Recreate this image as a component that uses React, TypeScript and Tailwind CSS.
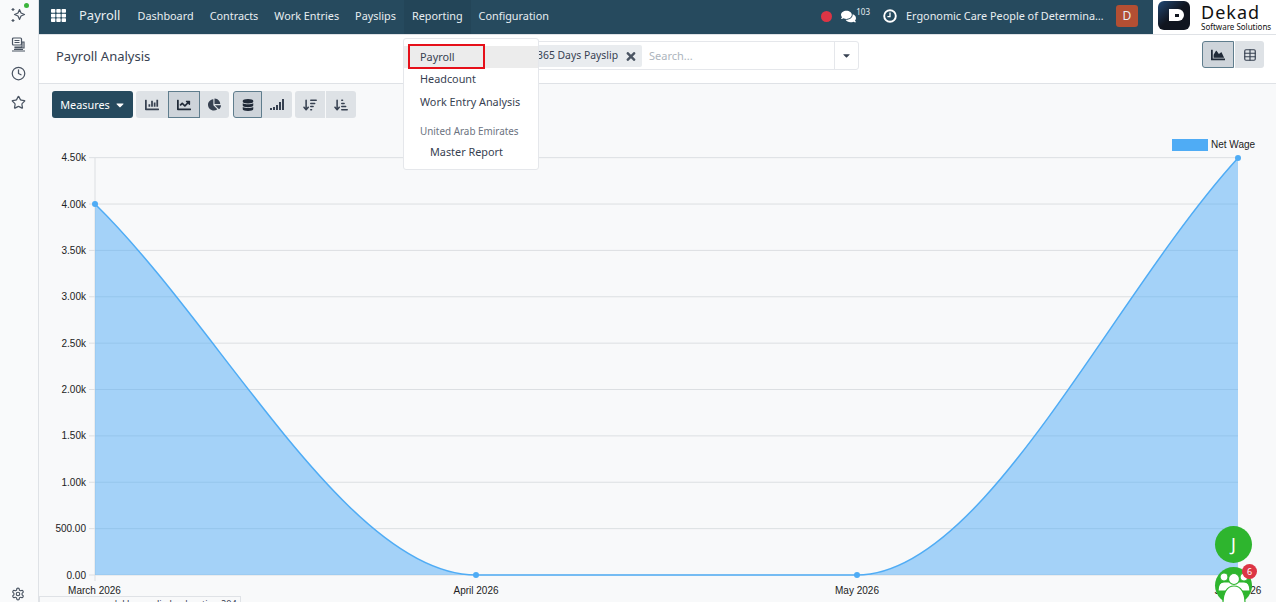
import { FaCaretDown, FaChartBar, FaChartLine, FaChartPie, FaChartArea, FaDatabase, FaTimes, FaTh, FaComments } from "react-icons/fa";
import { FaArrowDownWideShort, FaArrowDownShortWide } from "react-icons/fa6";
import { LuClock, LuStar, LuSettings, LuTable } from "react-icons/lu";

const menu = ["Dashboard", "Contracts", "Work Entries", "Payslips"];

function Sidebar() {
  return (
    <aside className="relative z-10 flex w-[39px] shrink-0 flex-col items-center border-r border-[#dfe2e6] bg-[#f9fafb] pr-[2px] text-[#4b5563]">
      <span className="absolute left-[24px] top-[3px] h-[5px] w-[5px] rounded-full bg-[#3cb53c]" />
      <svg className="mt-[7px]" width="16" height="16" viewBox="0 0 16 16" fill="none" stroke="currentColor" strokeWidth="1.2" strokeLinejoin="round">
        <path d="M9.5 2.5 11 6l3.5 1.5L11 9l-1.5 3.5L8 9 4.5 7.5 8 6z" />
        <path d="M3 1v3M1.5 2.5h3M3 12v3M1.5 13.5h3" />
      </svg>
      <svg className="mt-[14px]" width="15" height="15" viewBox="0 0 15 15" fill="none" stroke="currentColor" strokeWidth="1.2">
        <rect x="1.5" y="1" width="9" height="7" rx="1" />
        <path d="M3.5 3.5h5M3.5 5.5h5M4 10h7V5h2v6H4zM1 14h13M3 12.5h9" />
      </svg>
      <LuClock className="mt-[14px] text-[15px]" />
      <LuStar className="mt-[14px] text-[15px]" />
      <LuSettings className="mt-auto mb-[1px] text-[14px]" />
    </aside>
  );
}

function Navbar() {
  return (
    <header className="flex h-[35px] items-stretch border-b border-[#dfe2e6] bg-[#264a5e] text-[10.85px] text-[#e8eef1]">
      <div className="flex w-[27px] items-center justify-end pb-[3px]">
        <FaTh className="text-[15px] text-white" />
      </div>
      <span className="ml-[13px] flex items-center pb-[2px] text-[13px]">Payroll</span>
      <nav className="ml-[9px] flex">
        {menu.map((m) => (
          <span key={m} className="flex items-center px-[8px] pb-[2px]">{m}</span>
        ))}
        <span className="flex items-center bg-[#234558] px-[8px] pb-[2px]">Reporting</span>
        <span className="flex items-center px-[8px] pb-[2px]">Configuration</span>
      </nav>
      <div className="ml-auto flex items-center pb-[2px]">
        <span className="h-[11px] w-[11px] rounded-full bg-[#dc3545]" />
        <FaComments className="ml-[9px] text-[15px] text-white" />
        <sup className="text-[8px]">103</sup>
        <svg className="ml-[13px]" width="14" height="14" viewBox="0 0 14 14" fill="none" stroke="white">
          <circle cx="7" cy="7" r="5.8" strokeWidth="1.9" />
          <path d="M7 3.5V7.6H4.4" strokeWidth="1.3" />
        </svg>
        <span className="ml-[9px] w-[200px] truncate">Ergonomic Care People of Determination</span>
        <span className="ml-[10px] flex h-[22px] w-[22px] items-center justify-center rounded-[3px] bg-[#b34f33] text-[12px]">D</span>
      </div>
      <div className="ml-[15px] flex h-[34px] w-[123px] items-center bg-white pl-[5px]">
        <span className="mb-[4px] flex h-[29px] w-[32px] items-center justify-center rounded-[6px] bg-gradient-to-br from-[#1f4a78] via-[#10151f] to-[#10151f]">
          <span className="ml-[4px] flex h-[12px] w-[15px] items-center rounded-r-[6px] bg-white pl-[6px]">
            <span className="h-[3px] w-[4px] bg-[#10151f]" />
          </span>
        </span>
        <div className="ml-[11px] flex flex-col text-[#111]">
          <span className="text-[18px] leading-[19px] tracking-[1px]">Dekad</span>
          <span className="text-[8px] leading-[9px]">Software Solutions</span>
        </div>
      </div>
    </header>
  );
}

function ControlPanel() {
  return (
    <div className="flex h-[49px] items-center border-b border-[#dfe2e6] bg-white pb-[9px] pl-[17px] pr-[12px]">
      <span className="mt-[4px] text-[13px] text-[#374151]">Payroll Analysis</span>
      <div className="absolute left-[365px] top-[41px] flex h-[29px] w-[455px] items-center rounded-[3px] border border-[#e5e7eb]">
        <span className="ml-[132px] flex h-[22px] w-[105px] items-center justify-end whitespace-nowrap rounded-[2px] bg-[#e9ecef] pr-[5px] pt-[1px] text-[10.4px] text-[#374151]">
          365 Days Payslip
          <FaTimes className="ml-[7px] text-[13px] text-[#4b5563]" />
        </span>
        <span className="ml-[7px] pt-[1px] text-[11px] text-[#adb5bd]">Search...</span>
        <span className="ml-auto flex h-full w-[24px] items-center justify-center border-l border-[#e5e7eb]">
          <FaCaretDown className="text-[11px] text-[#374151]" />
        </span>
      </div>
      <div className="ml-auto flex gap-[1px]">
        <span className="flex h-[27px] w-[32px] items-center justify-center rounded-l-[3px] border border-[#5f7d8d] bg-[#ced4da] text-[#1f2937]">
          <FaChartArea className="text-[14px]" />
        </span>
        <span className="flex h-[27px] w-[29px] items-center justify-center rounded-r-[3px] bg-[#dee2e6] text-[#374151]">
          <LuTable className="text-[14px]" />
        </span>
      </div>
    </div>
  );
}

function Toolbar() {
  const btn = "flex h-[27px] items-center justify-center bg-[#dee2e6] text-[#374151]";
  const active = "flex h-[27px] items-center justify-center border border-[#5f7d8d] bg-[#ced4da] text-[#1f2937]";
  return (
    <div className="flex items-center gap-[3px] pl-[13px] pt-[7px]">
      <button className="flex h-[27px] w-[81px] items-center justify-center gap-[4px] rounded-[3px] bg-[#264a5e] pl-[1px] pt-[1px] text-[10.85px] text-white">
        Measures <FaCaretDown className="text-[12px]" />
      </button>
      <div className="flex">
        <span className={`${btn} w-[32px] rounded-l-[3px]`}><FaChartBar className="text-[14px]" /></span>
        <span className={`${active} w-[32px]`}><FaChartLine className="text-[14px]" /></span>
        <span className={`${btn} w-[29px] rounded-r-[3px]`}><FaChartPie className="text-[13px]" /></span>
      </div>
      <div className="ml-[1px] flex">
        <span className={`${active} w-[29px] rounded-l-[3px]`}><FaDatabase className="text-[12px]" /></span>
        <span className={`${btn} w-[30px] rounded-r-[3px]`}>
          <svg width="15" height="13" viewBox="0 0 15 13" fill="currentColor"><rect x="0" y="10" width="2" height="2" /><rect x="3" y="9" width="2" height="3" /><rect x="6" y="7" width="2" height="5" /><rect x="9" y="4" width="2" height="8" /><rect x="12" y="1" width="2" height="11" /></svg>
        </span>
      </div>
      <div className="flex gap-[1px]">
        <span className={`${btn} w-[30px] rounded-l-[3px]`}><FaArrowDownWideShort className="text-[14px]" /></span>
        <span className={`${btn} w-[30px] rounded-r-[3px]`}><FaArrowDownShortWide className="text-[14px]" /></span>
      </div>
    </div>
  );
}

function Chart() {
  const ticks = ["0.00", "500.00", "1.00k", "1.50k", "2.00k", "2.50k", "3.00k", "3.50k", "4.00k", "4.50k"];
  const curve = "M95 204 C222 328 349 575 476 575 L857 575 C984 575 1111 297 1238 158";
  return (
    <svg className="absolute left-0 top-0" width="1276" height="602" style={{ fontFamily: "'Liberation Sans', sans-serif" }}>
      {ticks.map((t, i) => {
        const y = 575 - i * 46.37;
        return (
          <g key={t}>
            <line x1="89" x2="1238" y1={y} y2={y} stroke="#dcdfe2" />
            <text x="86" y={y + 3.5} textAnchor="end" fontSize="10" fill="#222">{t}</text>
          </g>
        );
      })}
      <line x1="95" x2="95" y1="158" y2="581" stroke="#dcdfe2" />
      <path d={`${curve} L1238 575 L95 575 Z`} fill="#4facf5" fillOpacity="0.5" />
      <path d={curve} fill="none" stroke="#4facf5" strokeWidth="1.5" />
      {[[95, 204], [476, 575], [857, 575], [1238, 158]].map(([x, y]) => (
        <circle key={x} cx={x} cy={y} r="3" fill="#4facf5" />
      ))}
      <text x="94.5" y="594" textAnchor="middle" fontSize="10" fill="#222">March 2026</text>
      <text x="476" y="594" textAnchor="middle" fontSize="10" fill="#222">April 2026</text>
      <text x="857" y="594" textAnchor="middle" fontSize="10" fill="#222">May 2026</text>
      <text x="1238" y="594" textAnchor="middle" fontSize="10" fill="#222">June 2026</text>
      <rect x="1172" y="139" width="36" height="12" fill="#4facf5" />
      <text x="1211" y="148" fontSize="10" fill="#222">Net Wage</text>
    </svg>
  );
}

function ReportingMenu() {
  return (
    <div className="absolute left-[403px] top-[38px] z-10 h-[132px] w-[136px] rounded-[3px] border border-[#e5e7eb] bg-white pt-[7px] text-[10.85px] text-[#374151]">
      <div className="relative flex h-[22px] items-center bg-[#ececec] pl-[16px]">
        Payroll
        <span className="absolute left-[4px] top-[-2px] h-[25px] w-[77px] border-2 border-[#e6101a]" />
      </div>
      <div className="flex h-[23px] items-center pl-[16px]">Headcount</div>
      <div className="flex h-[22px] items-center pl-[16px]">Work Entry Analysis</div>
      <div className="mt-[8px] flex h-[21px] items-center pl-[16px] text-[9.9px] text-[#6b7280]">United Arab Emirates</div>
      <div className="flex h-[21px] items-center pl-[26px]">Master Report</div>
    </div>
  );
}

export default function App() {
  return (
    <div className="relative flex h-[602px] w-[1276px] overflow-hidden bg-[#f8f9fa]" style={{ fontFamily: "'Noto Sans', sans-serif" }}>
      <Chart />
      <Sidebar />
      <main className="relative flex-1">
        <Navbar />
        <ControlPanel />
        <Toolbar />
      </main>
      <ReportingMenu />
      <div className="absolute left-[39px] top-[596px] z-10 h-[12px] w-[202px] border border-[#dfe2e6] bg-[#f8f9fa] pl-[44px] pt-[1px] text-[9.1px] leading-[12px] whitespace-nowrap text-[#374151]">
        on model hr.payslip by duration 204
      </div>
      <div className="absolute left-[1215px] top-[526px] flex h-[37px] w-[37px] items-center justify-center rounded-full bg-[#2eb52e] text-[18px] text-white">J</div>
      <div className="absolute left-[1215px] top-[567px] h-[37px] w-[37px] rounded-full bg-[#2eb52e]">
        <svg width="37" height="37" viewBox="0 0 37 37" fill="white" stroke="#2eb52e" strokeWidth="1.2">
          <circle cx="9" cy="10" r="4" />
          <circle cx="29" cy="10" r="4" />
          <path d="M3 24c0-5 2-9 6-9h20c4 0 6 4 6 9z" />
          <circle cx="19" cy="12" r="5.5" />
          <path d="M8 36c0-10 4-17 11-17s11 7 11 17z" />
        </svg>
      </div>
      <div className="absolute left-[1242px] top-[564px] flex h-[15px] w-[15px] items-center justify-center rounded-full bg-[#dc3545] text-[9px] text-white">6</div>
    </div>
  );
}
